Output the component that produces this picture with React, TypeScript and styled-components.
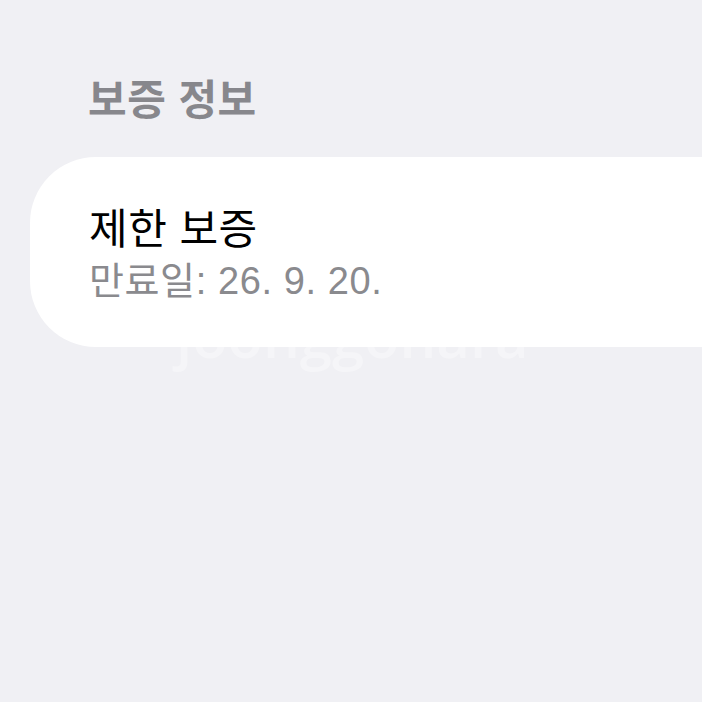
import styled, { createGlobalStyle } from "styled-components";

const Global = createGlobalStyle`
  html, body {
    margin: 0;
    padding: 0;
    background: #f0f0f4;
  }
  body {
    font-family: "Liberation Sans", "Noto Sans CJK KR", sans-serif;
  }
`;

const Page = styled.div`
  position: relative;
  width: 702px;
  height: 702px;
  overflow: hidden;
  background: #f0f0f4;
  display: flex;
  flex-direction: column;
`;

const SectionTitle = styled.h2`
  margin: 75px 0 0 88px;
  font-size: 42px;
  font-weight: 600;
  line-height: 52px;
  color: #87878c;
  letter-spacing: 0.5px;
`;

const Card = styled.div`
  margin: 30px 0 0 30px;
  height: 190px;
  box-sizing: border-box;
  background: #ffffff;
  border-radius: 66px 0 0 66px;
  padding: 5px 0 0 59px;
  display: flex;
  flex-direction: column;
  justify-content: center;
  position: relative;
  z-index: 1;
`;

const Title = styled.div`
  font-size: 42px;
  line-height: 52px;
  color: #000000;
  letter-spacing: 0.5px;
`;

const Sub = styled.div`
  font-size: 38px;
  line-height: 50px;
  color: #8a8a8e;
  letter-spacing: 0.6px;
`;

const Watermark = styled.div`
  position: absolute;
  left: 176px;
  top: 307px;
  font-family: "Open Sans", "Noto Sans", sans-serif;
  font-size: 58px;
  line-height: 58px;
  font-weight: 600;
  color: rgba(255, 255, 255, 0.35);
  pointer-events: none;
  z-index: 2;
`;

export default function App() {
  return (
    <Page>
      <Global />
      <SectionTitle>보증 정보</SectionTitle>
      <Card>
        <Title>제한 보증</Title>
        <Sub>만료일: 26. 9. 20.</Sub>
      </Card>
      <Watermark>joonggonara</Watermark>
    </Page>
  );
}
